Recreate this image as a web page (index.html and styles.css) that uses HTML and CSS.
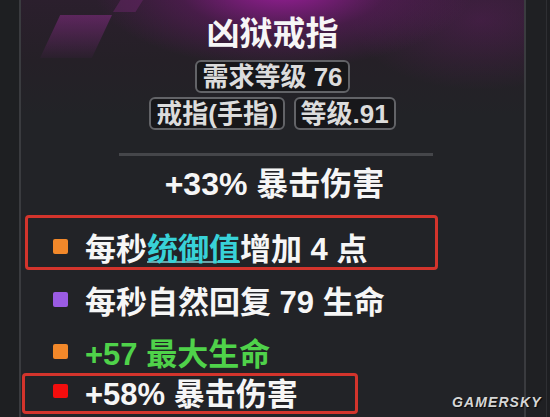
FILE: index.html
```html
<!DOCTYPE html>
<html lang="zh-CN">
<head>
<meta charset="utf-8">
<title>凶狱戒指</title>
<link rel="stylesheet" href="styles.css">
</head>
<body>
<div class="frame">
  <div class="strip-left"></div>
  <div class="panel">
    <h1 class="title">凶狱戒指</h1>
    <div class="badges">
      <span class="badge">需求等级 76</span>
    </div>
    <div class="badges badges-2">
      <span class="badge">戒指(手指)</span>
      <span class="badge">等级.91</span>
    </div>
    <div class="divider"></div>
    <div class="main-stat">+33% 暴击伤害</div>
    <div class="stats">
      <div class="row hl row-1">
        <span class="dot dot-orange"></span>
        <span class="txt">每秒<span class="link">统御值</span>增加 4 点</span>
      </div>
      <div class="row row-2">
        <span class="dot dot-purple"></span>
        <span class="txt">每秒自然回复 79 生命</span>
      </div>
      <div class="row row-3">
        <span class="dot dot-orange"></span>
        <span class="txt green">+57 最大生命</span>
      </div>
      <div class="row hl row-4">
        <span class="dot dot-red"></span>
        <span class="txt">+58% 暴击伤害</span>
      </div>
    </div>
  </div>
  <div class="strip-right"></div>
  <div class="watermark">GAMERSKY</div>
</div>
</body>
</html>
```

FILE: styles.css
```css
* { box-sizing: border-box; }
html, body {
  margin: 0;
  padding: 0;
  background: #1d1e21;
}
body {
  width: 550px;
  height: 417px;
  overflow: hidden;
  font-family: "Liberation Sans", "Noto Sans CJK SC", sans-serif;
  color: #f4f4f4;
}
.frame {
  position: relative;
  display: flex;
  width: 550px;
  height: 417px;
}
.strip-left {
  width: 19px;
  background: #1e1f22;
}
.panel {
  position: relative;
  width: 507px;
  border-left: 2px solid #3a3b3f;
  border-right: 2px solid #3a3b3f;
  background:
    radial-gradient(ellipse 190px 80px at 262px -12px, rgba(165, 30, 165, 0.9), rgba(115, 24, 115, 0.4) 55%, rgba(80, 20, 80, 0) 100%),
    radial-gradient(ellipse 130px 70px at 460px 20px, rgba(95, 30, 95, 0.45), rgba(95, 30, 95, 0) 100%),
    linear-gradient(180deg, #2b1f2d 0, #252027 60px, #222327 115px, #222327 100%);
  padding-top: 17px;
  overflow: hidden;
}
.panel::before {
  content: "";
  position: absolute;
  left: 19px;
  top: 15px;
  width: 72px;
  height: 43px;
  clip-path: polygon(28% 0, 100% 0, 72% 100%, 0 100%);
  background: linear-gradient(180deg, rgba(120, 42, 120, 0.65), rgba(70, 30, 75, 0.15));
}
.panel::after {
  content: "";
  position: absolute;
  left: 92px;
  top: 0;
  width: 30px;
  height: 12px;
  clip-path: polygon(25% 0, 100% 0, 75% 100%, 0 100%);
  background: rgba(110, 40, 110, 0.45);
}
.title {
  position: relative;
  z-index: 1;
  margin: 0;
  font-size: 33px;
  line-height: 33px;
  font-weight: 700;
  text-align: center;
  color: #f6f6f6;
}
.badges {
  position: relative;
  z-index: 1;
  display: flex;
  justify-content: center;
  gap: 9px;
  margin-top: 10px;
}
.badges-2 { margin-top: 4px; }
.badge {
  display: inline-block;
  font-size: 26px;
  line-height: 26px;
  font-weight: 700;
  color: #dcdcdc;
  padding: 2px 5px 1px;
  border: 2px solid #626367;
  border-radius: 6px;
  background: #17171a;
}
.divider {
  width: 314px;
  height: 3px;
  margin: 23px 0 0 98px;
  background: #45464a;
}
.main-stat {
  margin-top: 12px;
  padding-left: 4px;
  text-align: center;
  font-size: 32px;
  line-height: 32px;
  font-weight: 700;
  color: #f6f6f6;
}
.stats {
  display: flex;
  flex-direction: column;
  align-items: flex-start;
}
.row {
  display: flex;
  align-items: center;
  gap: 17px;
  padding-left: 32px;
  font-size: 31px;
  line-height: 32px;
  font-weight: 700;
}
.row.hl {
  border: 3px solid #d3342c;
  border-radius: 4px;
}
.row-1 {
  margin: 15px 0 0 4px;
  width: 413px;
  padding: 16px 0 1px 25px;
}
.row-2 { margin-top: 17px; }
.row-3 { margin-top: 20px; }
.row-4 {
  margin: 2px 0 0 1px;
  width: 336px;
  padding: 3px 0 0 28px;
}
.dot {
  flex: none;
  width: 15px;
  height: 15px;
  border-radius: 2px;
  margin-bottom: 8px;
}
.dot-orange { background: #f2882a; }
.dot-purple { background: #9a5be3; }
.dot-red { background: #f30d0d; height: 14px; }
.txt { white-space: nowrap; color: #f6f6f6; }
.green { color: #4fd24a; }
.link {
  color: #38d2d8;
  text-decoration: underline;
  text-decoration-color: #6aa4a8;
  text-decoration-thickness: 2px;
  text-underline-offset: 1px;
}
.strip-right {
  width: 21px;
  border-right: 1px solid #2e2f33;
  background: #1f2023;
}
.watermark {
  position: absolute;
  left: 452px;
  top: 394px;
  font-family: "Liberation Sans", Arial, sans-serif;
  font-style: italic;
  font-weight: 700;
  font-size: 14px;
  letter-spacing: 1.1px;
  color: #d6d6d6;
  text-shadow: 1px 1px 1px rgba(0, 0, 0, 0.7);
}
```
